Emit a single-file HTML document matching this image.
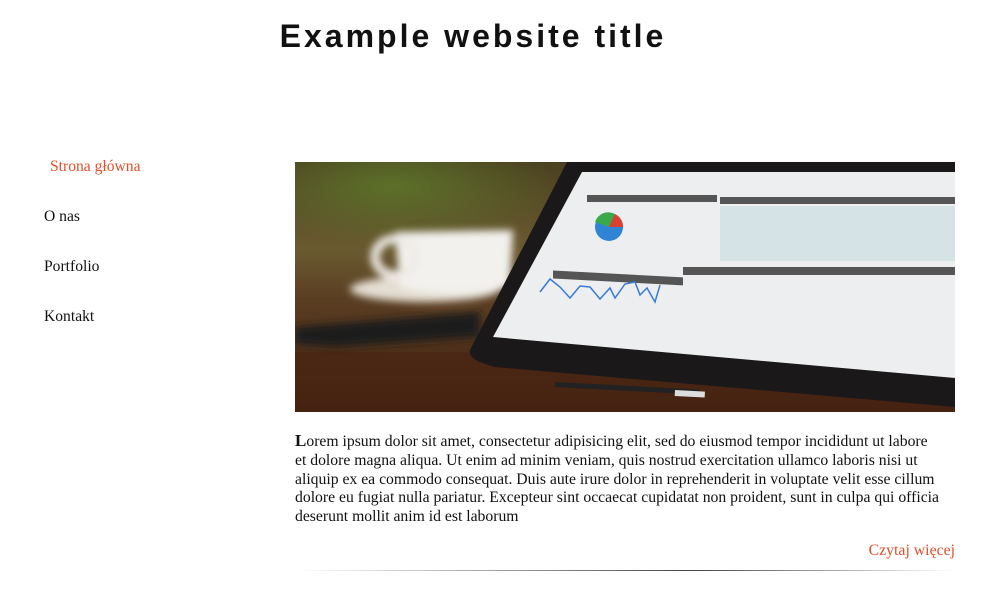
<!DOCTYPE html>
<html><head><meta charset="utf-8"><style>
body{margin:0;background:#fff;width:1005px;height:599px;overflow:hidden;position:relative;font-family:"Liberation Serif",serif;}
h1{position:absolute;left:0;width:946px;top:18px;margin:0;text-align:center;font:bold 32px "Liberation Sans",sans-serif;letter-spacing:3px;color:#111;}
.nav a{position:absolute;font-size:15.6px;color:#111;text-decoration:none;}
.txt{position:absolute;left:295px;top:432px;width:646px;font-size:15.7px;line-height:18.8px;color:#111;}
.more{position:absolute;right:50px;top:542px;font-size:15.8px;color:#e0502a;}
.hr{position:absolute;left:298px;top:570px;width:657px;height:1px;background:linear-gradient(90deg,#fff,#444 60%,#fff);}
</style></head><body>
<h1>Example website title</h1>
<div class="nav">
<a style="left:50px;top:158px;color:#e0502a">Strona główna</a>
<a style="left:44px;top:208px">O nas</a>
<a style="left:44px;top:258px">Portfolio</a>
<a style="left:44px;top:308px">Kontakt</a>
</div>
<svg style="position:absolute;left:295px;top:162px" width="660" height="250" viewBox="0 0 660 250">
<defs>
<linearGradient id="bg" x1="0" y1="0" x2="0" y2="1"><stop offset="0" stop-color="#4a4020"/><stop offset=".35" stop-color="#6a5a30"/><stop offset=".55" stop-color="#5a3e22"/><stop offset="1" stop-color="#3e1f10"/></linearGradient>
<radialGradient id="gr" cx=".3" cy=".2" r=".5"><stop offset="0" stop-color="#5e7a2a" stop-opacity=".8"/><stop offset="1" stop-color="#5e7a2a" stop-opacity="0"/></radialGradient>
<filter id="bl"><feGaussianBlur stdDeviation="4"/></filter>
</defs>
<rect width="660" height="250" fill="url(#bg)"/>
<rect width="330" height="120" fill="url(#gr)"/>
<rect y="190" width="660" height="60" fill="#4a2412" opacity=".7"/>
<g filter="url(#bl)">
<ellipse cx="130" cy="127" rx="75" ry="13" fill="#e4ddd2"/>
<path d="M100 70 L218 68 L215 125 Q160 140 105 125 Z" fill="#f3f1ee"/>
<ellipse cx="100" cy="95" rx="20" ry="18" fill="none" stroke="#eeebe6" stroke-width="9"/>
<path d="M0 165 L185 150 L185 175 L40 185 L0 182Z" fill="#1c1a1a"/>
</g>
<path d="M272 0 L660 0 L660 245 L200 205 Q172 198 175 188 Z" fill="#1a1818"/>
<path d="M287 10 L660 10 L660 216 L198 175 Z" fill="#eceeef"/>
<rect x="292" y="33" width="130" height="7" fill="#555"/>
<rect x="425" y="35" width="235" height="7" fill="#555"/>
<rect x="425" y="44" width="235" height="55" fill="#d6e3e6"/>
<rect x="258" y="95" width="130" height="8" fill="#555" transform="skewY(3)"/>
<rect x="388" y="105" width="272" height="8" fill="#555"/>
<circle cx="314" cy="65" r="14" fill="#2f84d6"/>
<path d="M314 65 L300 60 A14 14 0 0 1 320 52Z" fill="#3aa84b"/>
<path d="M314 65 L320 52 A14 14 0 0 1 328 65Z" fill="#d94030"/>
<polyline points="245,130 255,117 265,125 275,136 285,124 295,125 305,137 315,126 320,136 330,122 340,120 345,133 352,126 360,140 365,123" fill="none" stroke="#3a7bd5" stroke-width="1.5"/>
<rect x="260" y="220" width="145" height="5" fill="#222" transform="rotate(3 260 220)"/>
<rect x="380" y="228" width="30" height="6" fill="#ddd" transform="rotate(3 380 228)"/>
</svg>
<div class="txt"><b style="font-size:17px">L</b>orem ipsum dolor sit amet, consectetur adipisicing elit, sed do eiusmod tempor incididunt ut labore et dolore magna aliqua. Ut enim ad minim veniam, quis nostrud exercitation ullamco laboris nisi ut aliquip ex ea commodo consequat. Duis aute irure dolor in reprehenderit in voluptate velit esse cillum dolore eu fugiat nulla pariatur. Excepteur sint occaecat cupidatat non proident, sunt in culpa qui officia deserunt mollit anim id est laborum</div>
<div class="more">Czytaj więcej</div>
<div class="hr"></div>
</body></html>
